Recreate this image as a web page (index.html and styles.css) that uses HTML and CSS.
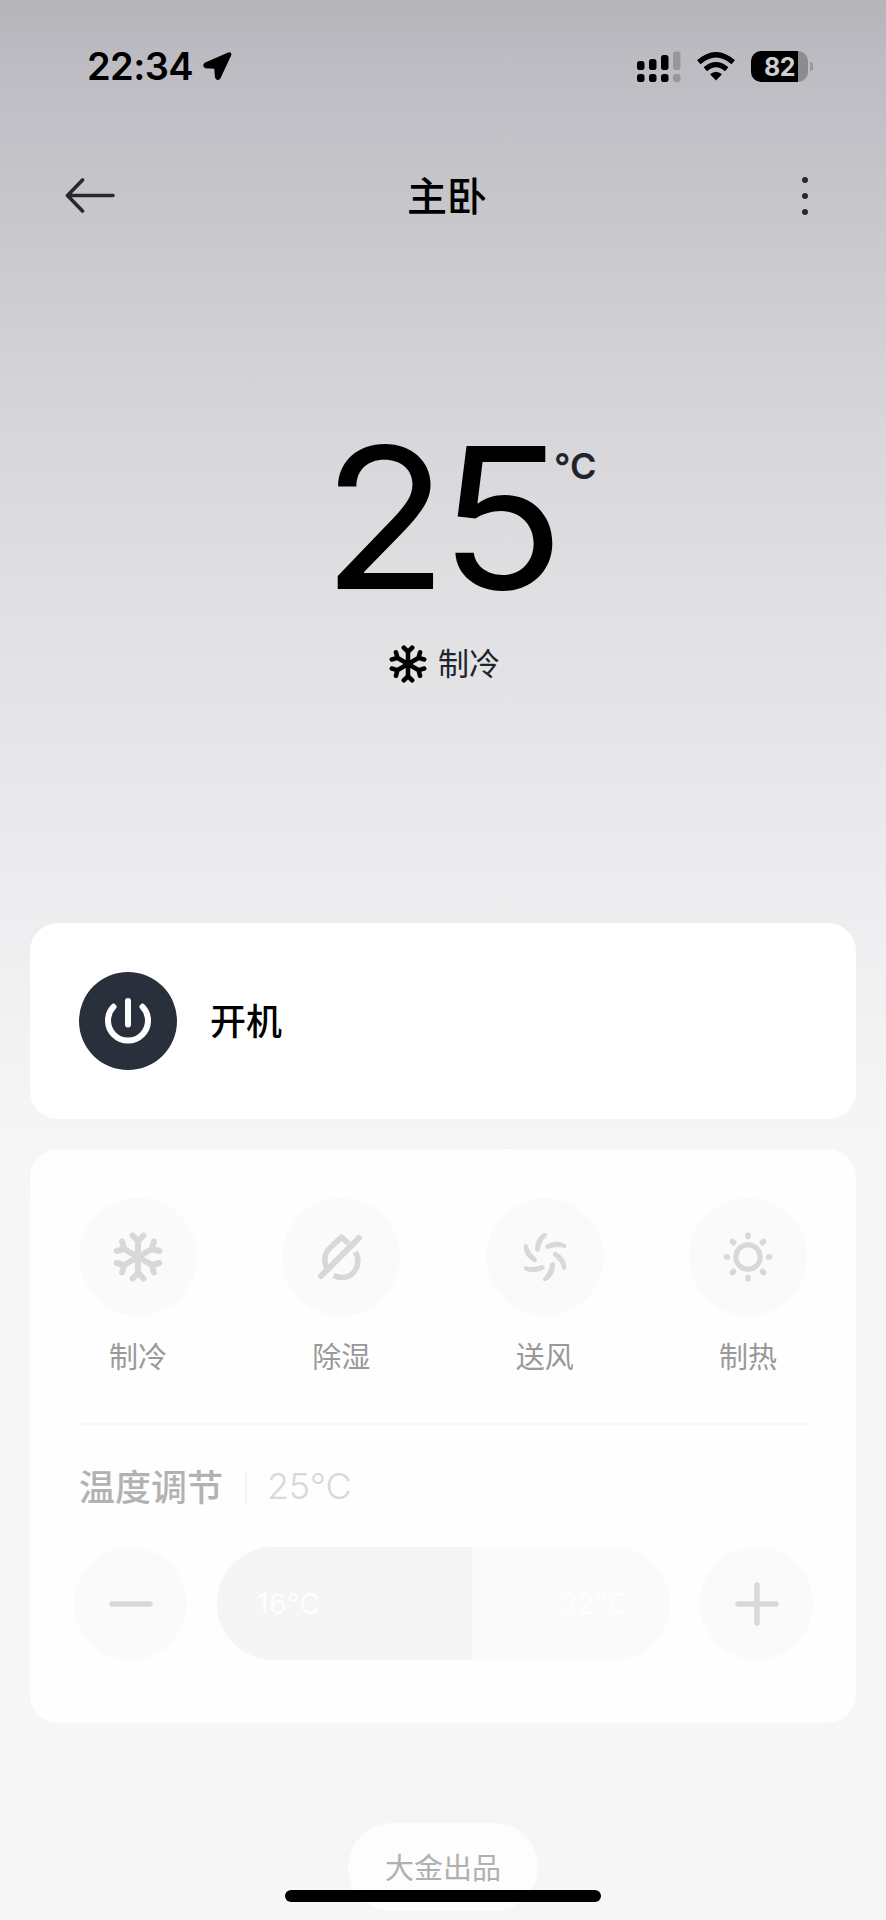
FILE: index.html
```html
<!DOCTYPE html>
<html lang="zh-CN">
<head>
<meta charset="utf-8">
<title>主卧</title>
<link rel="stylesheet" href="styles.css">
</head>
<body>
<svg class="defs" aria-hidden="true">
  <symbol id="snow" viewBox="-25 -25 50 50">
    <g fill="none" stroke="currentColor" stroke-linecap="round" stroke-linejoin="round">
      <path id="arm" d="M0 0V-17M-5.5 -21.5L0 -16L5.5 -21.5"/>
      <use href="#arm" transform="rotate(60)"/>
      <use href="#arm" transform="rotate(120)"/>
      <use href="#arm" transform="rotate(180)"/>
      <use href="#arm" transform="rotate(240)"/>
      <use href="#arm" transform="rotate(300)"/>
    </g>
  </symbol>
</svg>
<main class="screen">
  <header class="status">
    <div class="status-left">
      <span class="time">22:34</span>
      <svg class="locate" viewBox="0 0 30 30"><path d="M26.5 2.2 3 12.500Q.8 14.800 3.500 16.400L13 17 13.800 26.500Q15.200 29.800 17.800 27L28.500 4Q29 1.400 26.500 2.200Z" fill="#000" stroke="#000" stroke-width="1.600" stroke-linejoin="round"/></svg>
    </div>
    <div class="status-right">
      <svg class="signal" viewBox="0 0 44 31">
        <g fill="#000"><rect x="0" y="10" width="7.500" height="9" rx="2.800"/><rect x="12" y="8" width="7.500" height="11" rx="2.800"/><rect x="24" y="4" width="7.500" height="15" rx="2.800"/><rect x="0" y="23" width="7.500" height="8" rx="2.800"/><rect x="12" y="23" width="7.500" height="8" rx="2.800"/><rect x="24" y="23" width="7.500" height="8" rx="2.800"/></g>
        <g fill="#98979c"><rect x="36" y="0.500" width="7.500" height="18.500" rx="2.800"/><rect x="36" y="23" width="7.500" height="8" rx="2.800"/></g>
      </svg>
      <svg class="wifi" viewBox="0 0 38 29">
        <g fill="none" stroke="#000" stroke-width="5.200"><path d="M1.800 10.200Q19 -4.800 36.200 10.200"/><path d="M8.300 17.200Q19 8 29.700 17.200"/></g>
        <path d="M13 22.300Q19 17 25 22.300L19 28.500Z" fill="#000"/>
      </svg>
      <div class="battery"><span class="battery-body">82</span><span class="battery-tip"></span></div>
    </div>
  </header>

  <nav class="nav">
    <svg class="back" viewBox="0 0 50 36"><path d="M17.500 2 2.500 17.500 17.500 33M3 17.500H48" fill="none" stroke="#28282d" stroke-width="3.600" stroke-linecap="round" stroke-linejoin="round"/></svg>
    <h1 class="title">主卧</h1>
    <span class="more"><i></i><i></i><i></i></span>
  </nav>

  <section class="hero">
    <div class="temp"><span class="temp-value">25</span><span class="temp-unit">°C</span></div>
    <div class="mode-now"><svg class="snow-now"><use href="#snow"/></svg><span>制冷</span></div>
  </section>

  <section class="card power">
    <span class="power-btn">
      <svg viewBox="0 0 48 48"><path d="M9.500 9.800A20 20 0 1 0 38.500 9.800M24 4V27.500" fill="none" stroke="#fff" stroke-width="6" stroke-linecap="round"/></svg>
    </span>
    <span class="power-label">开机</span>
  </section>

  <section class="card panel">
    <div class="modes">
      <div class="mode"><span class="mode-icon"><svg><use href="#snow"/></svg></span><span>制冷</span></div>
      <div class="mode"><span class="mode-icon"><svg viewBox="-25 -25 50 50"><g fill="none" stroke="currentColor" stroke-width="5.500" stroke-linejoin="round"><path d="M-13.500 12.500C-18 4 -16.500 -4 -11.500 -8.500L0.500 -20L7.500 -13.500"/><path d="M14.500 -5C21 7 13 20.500 1.500 20.500Q-3.500 20.500 -7.500 18.500"/><path d="M-20 19 18 -19" stroke-width="6" stroke-linecap="round"/></g></svg></span><span>除湿</span></div>
      <div class="mode"><span class="mode-icon"><svg viewBox="-25 -25 50 50"><g fill="currentColor" stroke="currentColor" stroke-width="1.200"><path id="blade" d="M-9.200 -6.500C-9.700 -13 -7.200 -20.500 -0.500 -23.500Q2.500 -23.500 1.200 -21.500C-3.500 -17 -5.300 -12 -5.800 -7Q-7.500 -5 -9.200 -6.500Z"/><use href="#blade" transform="rotate(60)"/><use href="#blade" transform="rotate(120)"/><use href="#blade" transform="rotate(180)"/><use href="#blade" transform="rotate(240)"/><use href="#blade" transform="rotate(300)"/></g></svg></span><span>送风</span></div>
      <div class="mode"><span class="mode-icon"><svg viewBox="-25 -25 50 50"><g fill="none" stroke="currentColor" stroke-width="5.500" stroke-linecap="round"><circle r="12.200" stroke-width="5"/><path d="M0 -21.700V-20.500M0 21.700V20.500M-21.700 0H-20.500M21.700 0H20.500M-15.500 -15.500L-14.500 -14.500M15.500 -15.500L14.500 -14.500M-15.500 15.500L-14.500 14.500M15.500 15.500L14.500 14.500"/></g></svg></span><span>制热</span></div>
    </div>
    <div class="adjust-head"><span class="adjust-title">温度调节</span><i class="sep"></i><span class="adjust-value">25°C</span></div>
    <div class="adjust">
      <span class="round"><svg viewBox="0 0 44 44"><path d="M3 22H41"/></svg></span>
      <div class="slider"><span class="slider-fill">16°C</span><span class="slider-max">32°C</span></div>
      <span class="round"><svg viewBox="0 0 44 44"><path d="M3 22H41M22 3V41"/></svg></span>
    </div>
  </section>

  <footer class="brand">大金出品</footer>
  <span class="home-bar"></span>
</main>
</body>
</html>
```

FILE: styles.css
```css
* { box-sizing: border-box; }
body { margin: 0; font-family: Inter, "Noto Sans CJK SC", sans-serif; color: #000; }
i { font-style: normal; }
svg { display: block; }
.defs { position: absolute; width: 0; height: 0; }

.screen {
  position: relative;
  display: flex;
  flex-direction: column;
  width: 886px;
  height: 1920px;
  overflow: hidden;
  padding: 0 30px;
  background: linear-gradient(#b5b4b9 0, #bdbcc3 60px, #c6c5ca 190px, #d7d6db 430px, #e0e0e2 600px, #ededef 900px, #f5f5f6 1110px, #f6f6f6 1200px);
}

.status { display: flex; justify-content: space-between; height: 132px; padding: 0 43px 0 57px; }
.status-left, .status-right { display: flex; align-items: center; height: 132px; }
.time { font-size: 38px; font-weight: 600; line-height: 46px; letter-spacing: -0.6px; }
.locate { width: 30px; height: 30px; margin-left: 9px; }
.signal { width: 44px; height: 31px; margin-right: 16px; }
.wifi { width: 38px; height: 29px; margin-right: 16px; }
.battery { display: flex; align-items: center; gap: 2px; }
.battery-body {
  width: 57px; height: 31px; border-radius: 10px;
  background: linear-gradient(90deg, #000 47px, #8c8b90 47px);
  color: #cfced3; font-size: 25px; font-weight: 700; line-height: 32px; letter-spacing: -0.6px; text-align: center;
}
.battery-tip { width: 3px; height: 9px; border-radius: 0 3px 3px 0; background: #98979c; }

.nav { display: flex; align-items: center; justify-content: space-between; height: 128px; padding: 0 47px 0 35px; }
.back { width: 50px; height: 36px; }
.title { margin: 2px 0 0 -23px; font-size: 40px; font-weight: 500; line-height: 58px; }
.more { display: flex; flex-direction: column; gap: 10px; width: 7px; }
.more i { width: 6px; height: 6px; border-radius: 50%; background: #28282d; }

.hero { display: flex; flex-direction: column; align-items: center; height: 663px; padding-top: 139px; }
.temp { display: flex; align-items: flex-start; height: 238px; padding-left: 42px; }
.temp-value { font-size: 196px; line-height: 238px; letter-spacing: -8px; transform: translateX(2.500px) scaleX(1.05); transform-origin: 100% 50%; }
.temp-unit { margin-top: 45px; font-size: 36px; line-height: 44px; font-weight: 600; color: #20242b; }
.mode-now { display: flex; align-items: center; gap: 11px; margin-top: 4px; padding-left: 3px; font-size: 31px; line-height: 46px; color: #20242b; }
.snow-now { width: 38px; height: 38px; color: #000; stroke-width: 6; }

.card { border-radius: 28px; background: #fff; }
.power { display: flex; align-items: center; height: 196px; padding-left: 49px; }
.power-btn { display: grid; place-items: center; width: 98px; height: 98px; border-radius: 50%; background: #29303c; }
.power-btn svg { width: 48px; height: 48px; }
.power-label { margin: 2px 0 0 33px; font-size: 36px; font-weight: 500; line-height: 52px; }

.panel { height: 574px; margin-top: 30px; padding: 49px 43px 0 44px; background: #fefefe; }
.modes { display: flex; justify-content: space-between; height: 227px; margin: 0 6px 0 5px; border-bottom: 2px solid #f6f6f6; }
.mode { display: flex; flex-direction: column; align-items: center; gap: 21px; width: 118px; font-size: 29px; line-height: 42px; color: #999; }
.mode-icon { display: grid; place-items: center; width: 118px; height: 118px; border-radius: 50%; background: #fafafa; color: #d8d8d8; }
.mode-icon svg { width: 50px; height: 50px; stroke-width: 6; }

.adjust-head { display: flex; align-items: center; height: 122px; padding-left: 5px; }
.adjust-title { margin-top: -2px; font-size: 36px; font-weight: 500; color: #b2b2b2; }
.sep { width: 2px; height: 32px; margin: 4px 20px 0 22px; background: #f3f3f3; }
.adjust-value { font-size: 36px; font-weight: 300; letter-spacing: -0.3px; color: #d8d8d8; }
.adjust { display: flex; justify-content: space-between; }
.round { display: grid; place-items: center; width: 113px; height: 113px; border-radius: 50%; background: #fafafa; }
.round svg { width: 44px; height: 44px; fill: none; stroke: #d8d8d8; stroke-width: 5.500; stroke-linecap: round; }
.slider { display: flex; justify-content: space-between; width: 453px; height: 113px; border-radius: 57px; overflow: hidden; background: #fafafa; color: #fefefe; font-size: 28px; line-height: 114px; letter-spacing: 0.5px; }
.slider-fill { width: 255px; padding-left: 40px; background: #f5f5f5; }
.slider-max { padding-right: 41px; }

.brand { align-self: center; width: 190px; height: 88px; margin-top: 100px; border-radius: 44px; background: #fdfdfd; color: #b0b0b0; font-size: 29px; line-height: 91px; text-align: center; }
.home-bar { position: absolute; left: 285px; bottom: 18px; width: 316px; height: 12px; border-radius: 6px; background: #000; }
```
